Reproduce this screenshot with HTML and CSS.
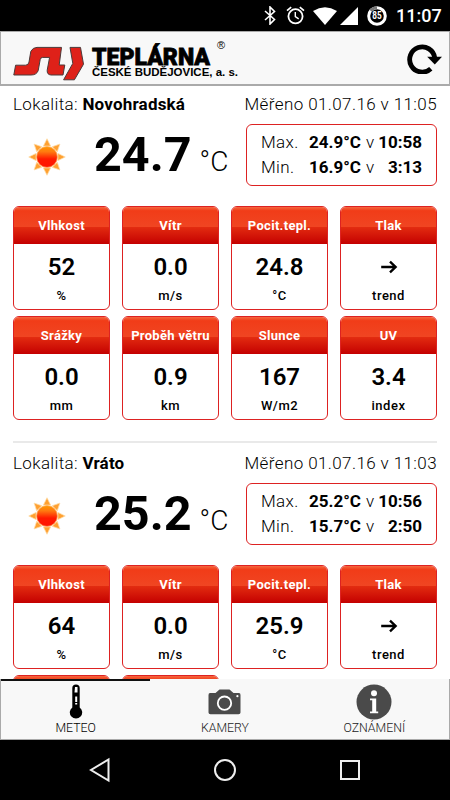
FILE: index.html
```html
<!DOCTYPE html>
<html lang="cs">
<head>
    <meta charset="UTF-8">
    <meta name="viewport" content="width=device-width, initial-scale=1">
    <title>Teplárna České Budějovice</title>
    <link rel="stylesheet" href="styles.css">
</head>
<body>
    <svg class="defs" width="0" height="0">
        <defs>
            <linearGradient id="sun-fill" x1="0" y1="0" x2="0" y2="1">
                <stop offset="0" stop-color="#ff9a00"/>
                <stop offset="0.25" stop-color="#ff7a10"/>
                <stop offset="0.6" stop-color="#ff1a00"/>
                <stop offset="1" stop-color="#ff1400"/>
            </linearGradient>
            <symbol id="sun" viewBox="0 0 40 40">
                <g fill="#ffa030" stroke="#ffdca8" stroke-width="0.8">
                    <path id="ray" d="M20 0.8 L23.8 8.5 H16.2 Z"/>
                    <use href="#ray" transform="rotate(45 20 20)"/>
                    <use href="#ray" transform="rotate(90 20 20)"/>
                    <use href="#ray" transform="rotate(135 20 20)"/>
                    <use href="#ray" transform="rotate(180 20 20)"/>
                    <use href="#ray" transform="rotate(225 20 20)"/>
                    <use href="#ray" transform="rotate(270 20 20)"/>
                    <use href="#ray" transform="rotate(315 20 20)"/>
                </g>
                <circle cx="20" cy="20" r="11" fill="url(#sun-fill)" stroke="#ffb060" stroke-width="0.8"/>
            </symbol>
            <symbol id="arrow" viewBox="0 0 18 14">
                <path d="M1.2 7 H15.5 M10 1.6 L15.6 7 L10 12.4" fill="none" stroke="#000" stroke-width="2.4"/>
            </symbol>
        </defs>
    </svg>

    <div class="status-bar">
        <svg class="bluetooth" width="12" height="19" viewBox="0 0 12 19">
            <path d="M1 5 L10.5 13.5 L6 18 V1 L10.5 5.5 L1 14" fill="none" stroke="#fff" stroke-width="1.6"/>
        </svg>
        <svg class="alarm" width="19" height="19" viewBox="0 0 19 19" fill="none" stroke="#fff">
            <circle cx="9.5" cy="10.3" r="7.1" stroke-width="1.8"/>
            <path d="M9.3 6 V10.7 L12.7 12.8" stroke-width="1.4"/>
            <path d="M1 4.6 L5.2 1.1 M18 4.6 L13.8 1.1" stroke-width="1.7"/>
        </svg>
        <svg class="wifi" width="24" height="18" viewBox="0 0 24 18">
            <path d="M0 4 Q12 -3.4 24 4 L12 18 Z" fill="#fff"/>
        </svg>
        <svg class="signal" width="18" height="18" viewBox="0 0 18 18">
            <path d="M18 0 V18 H0 Z" fill="#fff"/>
        </svg>
        <svg class="battery" width="20" height="20" viewBox="0 0 20 20">
            <circle cx="10" cy="10" r="8.3" fill="none" stroke="#fff" stroke-width="3"/>
            <path d="M3.6 4.7 A8.3 8.3 0 0 1 10 1.7" fill="none" stroke="#777" stroke-width="3"/>
            <text x="10" y="13.4" text-anchor="middle" textLength="9.4" lengthAdjust="spacingAndGlyphs">85</text>
        </svg>
        <span class="clock">11:07</span>
    </div>

    <header class="header">
        <svg class="logo" width="230" height="44" viewBox="0 0 230 44">
            <g fill="#de2119" stroke="#4a3a3a" stroke-width="1">
                <path d="M2.6 29.2 H12.5 Q15.5 29.2 16 26.1 L17.8 15.4 Q19.8 11.4 24 11.4 H48.5 L46.2 29 H51.8 L50 39 H38 Q33.8 38.6 34.2 34.2 L36.6 21.4 H29.6 Q27.6 21.4 27.2 23.6 L25.2 34.6 Q23.6 39 18 39 H0.8 Z"/>
                <path d="M57 11.4 H67.5 L70.5 28.2 L61.4 43.8 H50.6 L59.8 27.4 Z"/>
            </g>
            <text class="logo-name" x="79" y="28.8" textLength="118" lengthAdjust="spacingAndGlyphs">TEPLÁRNA</text>
            <text class="logo-city" x="79" y="39.6" textLength="146" lengthAdjust="spacingAndGlyphs">ČESKÉ BUDĚJOVICE, a. s.</text>
            <text class="logo-mark" x="204" y="13">®</text>
        </svg>
        <svg class="refresh" width="36" height="32" viewBox="0 0 36 32">
            <path d="M23.8 26.8 A12.6 12.6 0 1 1 27.8 16" fill="none" stroke="#000" stroke-width="4.8"/>
            <path d="M20.2 14.8 H35 L27.8 22.6 Z"/>
        </svg>
    </header>

    <main class="content">
        <section class="station">
            <div class="station-info">
                <span>Lokalita: <b>Novohradská</b></span>
                <span class="measured">Měřeno 01.07.16 v 11:05</span>
            </div>
            <div class="summary">
                <svg class="sun"><use href="#sun"/></svg>
                <div class="temperature"><b>24.7</b><span>°C</span></div>
                <div class="extremes">
                    <span>Max.</span><b>24.9°C</b><span>v</span><b class="at">10:58</b>
                    <span>Min.</span><b>16.9°C</b><span>v</span><b class="at">3:13</b>
                </div>
            </div>
            <div class="cards">
                <div class="card"><h3>Vlhkost</h3><strong>52</strong><span>%</span></div>
                <div class="card"><h3>Vítr</h3><strong>0.0</strong><span>m/s</span></div>
                <div class="card"><h3>Pocit.tepl.</h3><strong>24.8</strong><span>°C</span></div>
                <div class="card"><h3>Tlak</h3><strong><svg class="arrow"><use href="#arrow"/></svg></strong><span>trend</span></div>
                <div class="card"><h3>Srážky</h3><strong>0.0</strong><span>mm</span></div>
                <div class="card"><h3>Proběh větru</h3><strong>0.9</strong><span>km</span></div>
                <div class="card"><h3>Slunce</h3><strong>167</strong><span>W/m2</span></div>
                <div class="card"><h3>UV</h3><strong>3.4</strong><span>index</span></div>
            </div>
        </section>

        <section class="station">
            <div class="station-info">
                <span>Lokalita: <b>Vráto</b></span>
                <span class="measured">Měřeno 01.07.16 v 11:03</span>
            </div>
            <div class="summary">
                <svg class="sun"><use href="#sun"/></svg>
                <div class="temperature"><b>25.2</b><span>°C</span></div>
                <div class="extremes">
                    <span>Max.</span><b>25.2°C</b><span>v</span><b class="at">10:56</b>
                    <span>Min.</span><b>15.7°C</b><span>v</span><b class="at">2:50</b>
                </div>
            </div>
            <div class="cards">
                <div class="card"><h3>Vlhkost</h3><strong>64</strong><span>%</span></div>
                <div class="card"><h3>Vítr</h3><strong>0.0</strong><span>m/s</span></div>
                <div class="card"><h3>Pocit.tepl.</h3><strong>25.9</strong><span>°C</span></div>
                <div class="card"><h3>Tlak</h3><strong><svg class="arrow"><use href="#arrow"/></svg></strong><span>trend</span></div>
                <div class="card"><h3></h3></div>
                <div class="card"><h3></h3></div>
            </div>
        </section>
    </main>

    <nav class="tabs">
        <a class="tab active">
            <svg width="14" height="36" viewBox="0 0 14 36">
                <path d="M3.3 4 Q3.3 0.5 7 0.5 Q10.7 0.5 10.7 4 V23.4 A6.2 6.2 0 1 1 3.3 23.4 Z"/>
                <path d="M6 3 H8.5 V8.5 H5.5 Z M6.2 12.5 H8.2 V18 H6.2 Z M6.2 19 H8.2 V20.5 H6.2 Z" fill="#fff"/>
            </svg>
            <span>METEO</span>
        </a>
        <a class="tab">
            <svg width="33" height="36" viewBox="0 0 33 36">
                <path d="M2 9 H7.5 L11.5 5.5 H21.5 L25.5 9 H31 Q32.5 9 32.5 11 V28.5 Q32.5 30.3 30.5 30.3 H2.5 Q0.5 30.3 0.5 28.5 V11 Q0.5 9 2 9 Z" fill="#4a4a4a"/>
                <circle cx="16.5" cy="19.2" r="6.7" fill="none" stroke="#fff" stroke-width="1.8"/>
                <circle cx="29.4" cy="12.2" r="1.1" fill="#fff"/>
            </svg>
            <span>KAMERY</span>
        </a>
        <a class="tab">
            <svg width="36" height="36" viewBox="0 0 36 36">
                <circle cx="18" cy="18" r="17.5" fill="#4a4a4a"/>
                <circle cx="18" cy="9.3" r="3" fill="#fff"/>
                <path d="M14 14.5 H20.2 V27.5 H22.2 V29.3 H14 V27.5 H16.2 V16.3 H14 Z" fill="#fff"/>
            </svg>
            <span>OZNÁMENÍ</span>
        </a>
    </nav>

    <div class="nav-bar">
        <svg width="22" height="26" viewBox="0 0 22 26"><path d="M20.5 2.5 V23.5 L3 13 Z"/></svg>
        <svg width="24" height="24" viewBox="0 0 24 24"><circle cx="12" cy="12" r="10"/></svg>
        <svg width="20" height="20" viewBox="0 0 20 20"><rect x="1" y="1" width="18" height="18"/></svg>
    </div>
</body>
</html>
```
FILE: styles.css
```css
* {
    box-sizing: border-box;
}
body {
    margin: 0;
    height: 100vh;
    display: flex;
    flex-direction: column;
    overflow: hidden;
    background: #fff;
    color: #000;
    font-family: Roboto, sans-serif;
}
svg {
    display: block;
    flex-shrink: 0;
}
.defs {
    position: absolute;
}

/* Status bar */
.status-bar {
    flex: 0 0 31px;
    display: flex;
    align-items: center;
    justify-content: flex-end;
    padding-right: 10px;
    background: #000;
    color: #fff;
}
.alarm {
    margin-left: 10px;
}
.wifi {
    margin-left: 8px;
}
.signal {
    margin-left: 3px;
}
.battery {
    margin-left: 9px;
    margin-right: 1px;
}
.battery text {
    fill: #fff;
    font-size: 10px;
    font-weight: 700;
}
.clock {
    margin-left: 8px;
    width: 44px;
    font-size: 18px;
    font-weight: 500;
    white-space: nowrap;
}

/* Header */
.header {
    flex: 0 0 55px;
    display: flex;
    align-items: center;
    justify-content: space-between;
    padding: 0 6px 0 12px;
    background: #f8f8f8;
    border: 1px solid #aaa;
    border-bottom-width: 2px;
}
.logo {
    overflow: visible;
}
.logo-name {
    font-size: 23px;
    font-weight: 900;
    stroke: #000;
    stroke-width: 0.8px;
}
.logo-city {
    font-family: "Liberation Sans", sans-serif;
    font-size: 10px;
    font-weight: 700;
}
.logo-mark {
    font-family: "Liberation Sans", sans-serif;
    font-size: 11px;
}

/* Stations */
.content {
    flex: 1;
    min-height: 0;
    overflow: hidden;
    padding: 0 13px;
}
.station {
    height: 355px;
    padding-top: 8px;
}
.station + .station {
    height: 359px;
    padding-top: 10px;
    border-top: 2px solid #e9e9e9;
}
.station-info {
    display: flex;
    justify-content: space-between;
    height: 30px;
    font-size: 17px;
    font-weight: 300;
    letter-spacing: 0.35px;
    line-height: 20px;
    white-space: nowrap;
}
.station-info b {
    font-weight: 700;
    letter-spacing: 0.2px;
}
.station-info .measured {
    letter-spacing: 0.4px;
}
.summary {
    display: flex;
    align-items: center;
    height: 62px;
    margin-bottom: 20px;
}
.sun {
    width: 38px;
    height: 38px;
    margin-left: 15px;
    margin-top: 3px;
}
.temperature {
    display: flex;
    align-items: baseline;
    flex: 1;
    margin-left: 28px;
    padding-top: 6px;
    line-height: 60px;
}
.temperature b {
    font-size: 48.5px;
    font-weight: 700;
}
.temperature span {
    margin-left: 8px;
    font-size: 28px;
    font-weight: 300;
}
.extremes {
    display: grid;
    grid-template-columns: 48px 57px 11px 45px;
    align-content: center;
    width: 191px;
    height: 62px;
    padding-left: 14px;
    border: 1px solid #d22;
    border-radius: 6px;
    font-size: 17px;
    font-weight: 300;
    line-height: 25px;
    white-space: nowrap;
}
.extremes span {
    letter-spacing: 0.4px;
}
.extremes b {
    font-weight: 700;
}
.extremes .at {
    text-align: right;
}

/* Cards */
.cards {
    display: grid;
    grid-template-columns: repeat(4, 97px);
    justify-content: space-between;
    row-gap: 6px;
}
.card {
    height: 104px;
    display: flex;
    flex-direction: column;
    align-items: center;
    overflow: hidden;
    border: 1px solid #d22;
    border-radius: 6px;
}
.card h3 {
    width: 100%;
    height: 37px;
    margin: 0;
    background: linear-gradient(#f5673f 0, #f13c18 10%, #f04522 53%, #e22b10 55%, #c40000 100%);
    color: #fff;
    font-size: 13px;
    font-weight: 700;
    letter-spacing: 0.3px;
    line-height: 37px;
    text-align: center;
    white-space: nowrap;
}
.card strong {
    display: flex;
    align-items: center;
    height: 45px;
    font-size: 24px;
    font-weight: 600;
}
.card span {
    font-size: 13px;
    font-weight: 500;
    letter-spacing: 0.5px;
    line-height: 13px;
}
.arrow {
    width: 18px;
    height: 14px;
}

/* Bottom tabs */
.tabs {
    flex: 0 0 61px;
    display: grid;
    grid-template-columns: repeat(3, 1fr);
    background: #f8f8f8;
    border: solid #aaa;
    border-width: 0 1px 1px;
}
.tab {
    display: flex;
    flex-direction: column;
    align-items: center;
    padding-top: 3px;
    border-top: 2px solid transparent;
    color: #222;
    font-size: 12.3px;
    font-weight: 300;
    line-height: 16px;
}
.tab.active {
    border-top-color: #111;
    color: #000;
}

/* System navigation */
.nav-bar {
    flex: 0 0 60px;
    display: flex;
    align-items: center;
    justify-content: center;
    gap: 103px;
    padding-right: 3px;
    background: #000;
}
.nav-bar svg {
    fill: none;
    stroke: #eee;
    stroke-width: 2;
}
```
